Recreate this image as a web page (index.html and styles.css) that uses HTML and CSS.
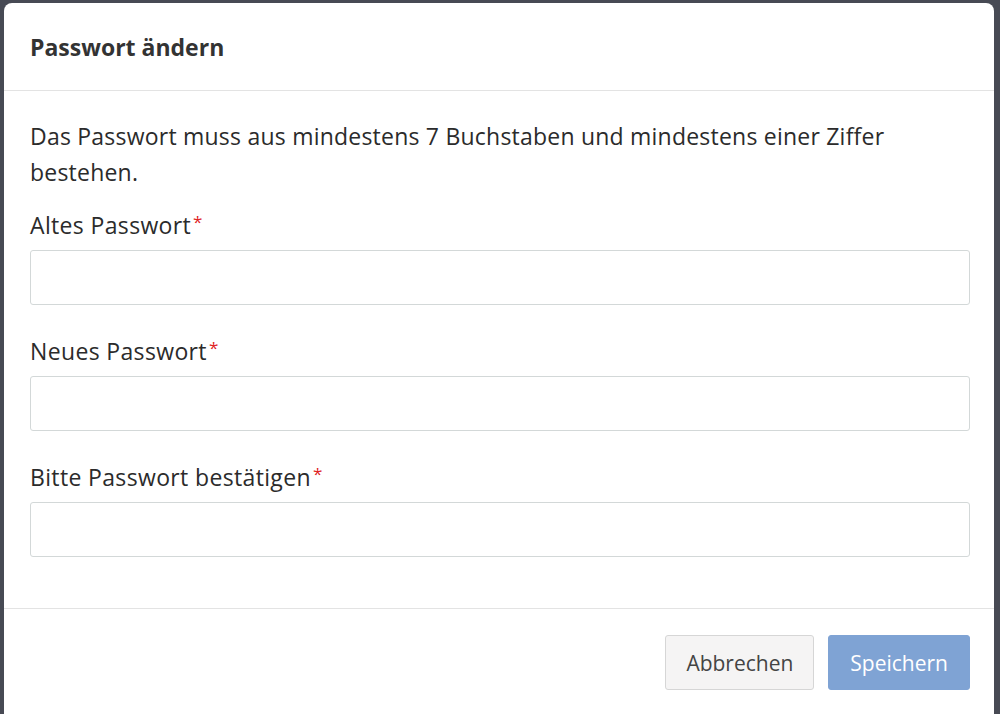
FILE: index.html
```html
<!DOCTYPE html>
<html lang="de">
<head>
    <meta charset="UTF-8">
    <meta name="viewport" content="width=device-width, initial-scale=1.0">
    <title>Passwort ändern</title>
    <link rel="stylesheet" href="styles.css">
</head>
<body>

    <div class="modal">
        <div class="modal-header">
            <h2>Passwort ändern</h2>
        </div>

        <div class="modal-body">
            <p class="hint">Das Passwort muss aus mindestens 7 Buchstaben und mindestens einer Ziffer bestehen.</p>

            <div class="field">
                <label for="oldPw">Altes Passwort<span class="req">*</span></label>
                <input type="password" id="oldPw">
            </div>

            <div class="field">
                <label for="newPw">Neues Passwort<span class="req">*</span></label>
                <input type="password" id="newPw">
            </div>

            <div class="field">
                <label for="confirmPw">Bitte Passwort bestätigen<span class="req">*</span></label>
                <input type="password" id="confirmPw">
            </div>
        </div>

        <div class="modal-footer">
            <button class="btn btn-default">Abbrechen</button>
            <button class="btn btn-primary" disabled>Speichern</button>
        </div>
    </div>

</body>
</html>
```

FILE: styles.css
```css
body {
    font-family: 'Open Sans', 'Liberation Sans', sans-serif;
    margin: 0;
    padding: 3px 0 0 4px;
    background-color: #474a54;
    color: #2b2b2b;
    height: 714px;
    box-sizing: border-box;
    overflow: hidden;
}
.modal {
    width: 990px;
    height: 720px;
    background: white;
    border-radius: 8px;
    overflow: hidden;
}
.modal-header {
    height: 87px;
    padding: 0 26px;
    display: flex;
    align-items: center;
    border-bottom: 1px solid #e3e3e3;
}
.modal-header h2 {
    margin: 0;
    font-size: 23px;
    font-weight: bold;
    color: #333;
}
.modal-body {
    padding: 27px 24px 23px 26px;
    border-bottom: 1px solid #e3e3e3;
}
.hint {
    margin: 0 0 17px;
    font-size: 23px;
    letter-spacing: 0.22px;
    line-height: 36px;
}
.field {
    margin-bottom: 28px;
}
.field label {
    display: block;
    font-size: 23px;
    letter-spacing: 0.35px;
    line-height: 36px;
    margin-bottom: 7px;
}
.req {
    color: #e0231f;
    font-size: 17px;
    line-height: 1;
    position: relative;
    top: -6px;
    margin-left: 2px;
}
.field input {
    display: block;
    width: 100%;
    height: 55px;
    box-sizing: border-box;
    border: 1px solid #d3d8d8;
    border-radius: 3px;
    padding: 0 12px;
    font-size: 20px;
}
.modal-footer {
    display: flex;
    justify-content: flex-end;
    gap: 14px;
    padding: 26px 24px 0 26px;
}
.btn {
    font-family: inherit;
    font-size: 21px;
    height: 55px;
    padding: 0 20px;
    border-radius: 3px;
    cursor: pointer;
}
.btn-default {
    padding: 0 20px;
    background: #f5f4f4;
    border: 1px solid #d6d6d6;
    color: #444;
}
.btn-primary {
    padding: 0 21px;
    background: #7fa3d4;
    border: 1px solid #7fa3d4;
    color: white;
}
```
